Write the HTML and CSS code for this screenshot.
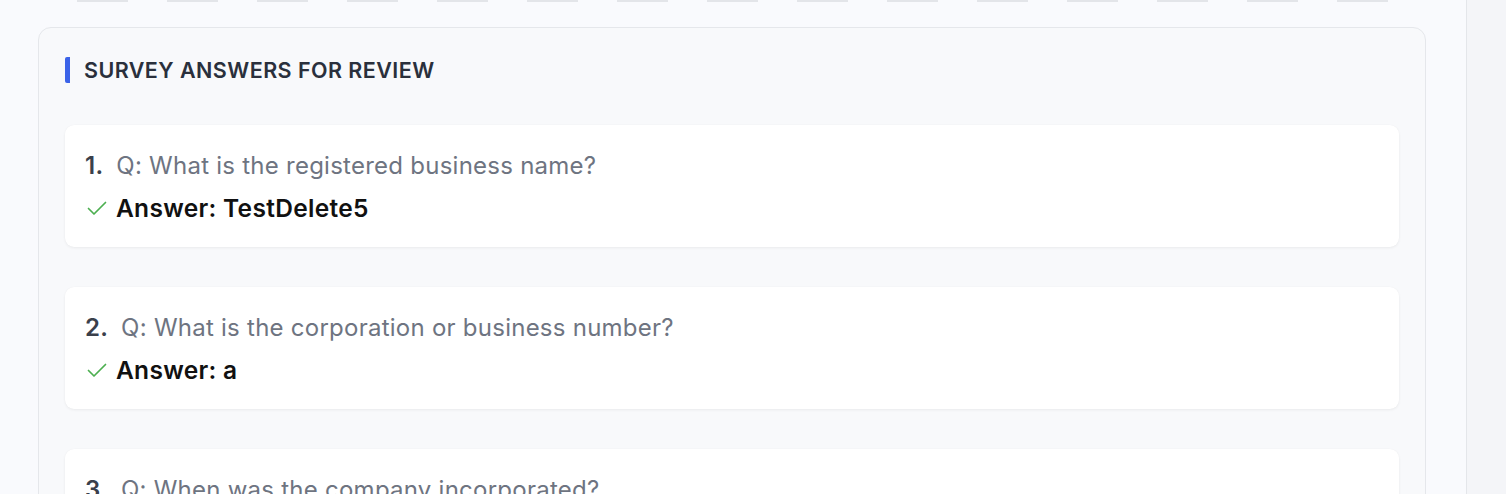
FILE: index.html
```html
<!DOCTYPE html>
<html>
<head>
<meta charset="utf-8">
<link rel="stylesheet" href="styles.css">
</head>
<body>
<div class="layout">
  <main class="main">
    <div class="ticks">
      <span></span><span></span><span></span><span></span><span></span>
      <span></span><span></span><span></span><span></span><span></span>
      <span></span><span></span><span></span><span></span><span></span>
    </div>
    <section class="panel">
      <h2 class="panel-title">SURVEY ANSWERS FOR REVIEW</h2>
      <div class="list">
        <div class="card">
          <div class="q"><span class="num">1.</span><span class="qtext">Q: What is the registered business name?</span></div>
          <div class="a">
            <svg class="check" viewBox="0 0 24 24" width="24" height="24"><path d="M3.5 12.5l5.5 5.5L20.5 6.5" fill="none" stroke="#4caf50" stroke-width="1.7" stroke-linecap="round" stroke-linejoin="round"/></svg>
            <span class="atext">Answer: TestDelete5</span>
          </div>
        </div>
        <div class="card">
          <div class="q"><span class="num">2.</span><span class="qtext">Q: What is the corporation or business number?</span></div>
          <div class="a">
            <svg class="check" viewBox="0 0 24 24" width="24" height="24"><path d="M3.5 12.5l5.5 5.5L20.5 6.5" fill="none" stroke="#4caf50" stroke-width="1.7" stroke-linecap="round" stroke-linejoin="round"/></svg>
            <span class="atext">Answer: a</span>
          </div>
        </div>
        <div class="card">
          <div class="q"><span class="num">3.</span><span class="qtext">Q: When was the company incorporated?</span></div>
          <div class="a">
            <svg class="check" viewBox="0 0 24 24" width="24" height="24"><path d="M3.5 12.5l5.5 5.5L20.5 6.5" fill="none" stroke="#4caf50" stroke-width="1.7" stroke-linecap="round" stroke-linejoin="round"/></svg>
            <span class="atext">Answer: 2020</span>
          </div>
        </div>
      </div>
    </section>
  </main>
  <aside class="side"></aside>
</div>
</body>
</html>
```

FILE: styles.css
```css
* { box-sizing: border-box; }
html, body { margin: 0; padding: 0; }
body {
  font-family: Inter, "Noto Sans", sans-serif;
  background: #f9fafd;
  height: 494px;
  overflow: hidden;
}
.layout {
  display: flex;
  height: 494px;
}
.main {
  width: 1466px;
  flex: none;
  padding: 0 40px 0 38px;
  background: #f9fafd;
  overflow: hidden;
}
.side {
  flex: 1;
  border-left: 1px solid #e4e6ea;
  background: #f4f5f8;
}
.ticks {
  display: flex;
  gap: 39px;
  padding-left: 39px;
  height: 27px;
}
.ticks span {
  width: 51px;
  height: 2px;
  background: #e3e5e9;
  flex: none;
}
.panel {
  background: #f8f9fb;
  border: 1px solid #e5e7eb;
  border-radius: 13px;
  padding: 29px 26px 0 26px;
  height: 600px;
}
.panel-title {
  margin: 0;
  font-size: 21.5px;
  font-weight: 600;
  color: #2a303c;
  letter-spacing: 0.45px;
  border-left: 5px solid #3b63e8;
  border-radius: 2px;
  padding-left: 14px;
  line-height: 26px;
  height: 26px;
  display: flex;
  align-items: center;
}
.list {
  margin-top: 42px;
  display: flex;
  flex-direction: column;
  gap: 40px;
}
.card {
  background: #fff;
  border-radius: 9px;
  box-shadow: 0 1px 3px rgba(0,0,0,0.06), 0 0 1px rgba(0,0,0,0.04);
  height: 122px;
  padding: 25px 19px 0 20px;
}
.q {
  display: flex;
  align-items: baseline;
  font-size: 24px;
  line-height: 32px;
  letter-spacing: 0.25px;
}
.num {
  font-weight: 600;
  color: #3a404b;
  margin-right: 13px;
}
.qtext {
  color: #6e7481;
  font-weight: 400;
}
.a {
  display: flex;
  align-items: center;
  margin-top: 11px;
  font-size: 24.5px;
  line-height: 30px;
  letter-spacing: 0.3px;
}
.check {
  margin-left: 0;
  margin-right: 7px;
  flex: none;
}
.atext {
  font-weight: 600;
  color: #111;
}
```
